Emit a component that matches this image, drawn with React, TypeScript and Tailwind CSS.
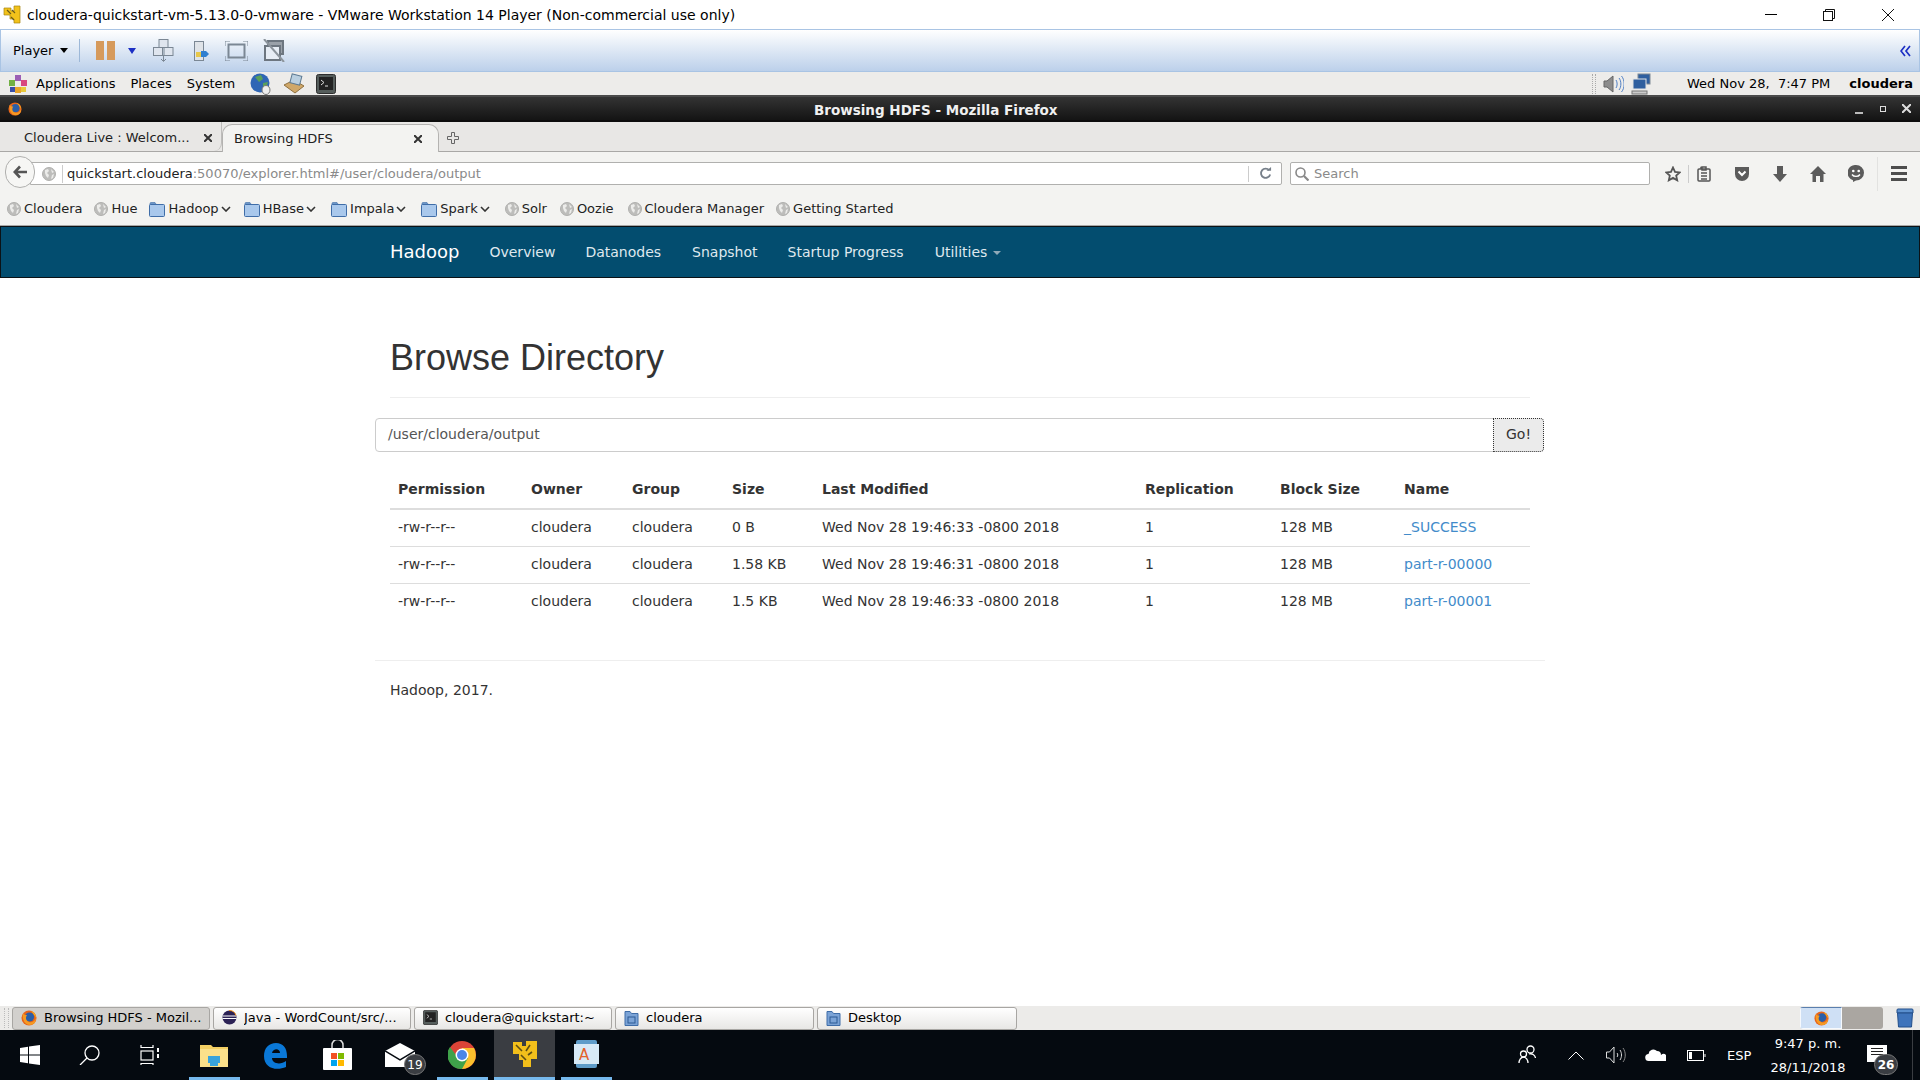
import React from 'react';

const rows = [
  { size: '0 B', time: 'Wed Nov 28 19:46:33 -0800 2018', name: '_SUCCESS' },
  { size: '1.58 KB', time: 'Wed Nov 28 19:46:31 -0800 2018', name: 'part-r-00000' },
  { size: '1.5 KB', time: 'Wed Nov 28 19:46:33 -0800 2018', name: 'part-r-00001' },
];

const Firefox = ({ className }: { className: string }) => (
  <svg viewBox="0 0 16 16" className={className}>
    <circle cx="8" cy="8" r="7.5" fill="#e8641b" />
    <circle cx="8.5" cy="7" r="4.6" fill="#2b5fa8" />
    <path d="M2 3c-1 5 1 12 7 12 4 0 6-3 6-7-1 3-4 5-7 4-3-1-4-4-2-7-2 0-3 0-4-2z" fill="#f59a23" />
    <path d="M10 1c3 1 5 4 5 7-1-2-2-4-5-7z" fill="#f6c21c" />
  </svg>
);

const Globe = () => (
  <svg viewBox="0 0 14 14" className="w-[14px] h-[14px] shrink-0">
    <circle cx="7" cy="7" r="6.5" fill="#bdbdbb" stroke="#b0b0ae" />
    <path d="M3 3l3-1 1 2-2 2 2 2-1 3-2-2-1-3zM9 2l3 3-2 1zM10 8l2-1-1 4-2 1z" fill="#ececea" />
  </svg>
);

const Folder = () => (
  <svg viewBox="0 0 16 16" className="w-[16px] h-[16px] shrink-0">
    <path d="M1 2.500a1 1 0 0 1 1-1h4l1 1.500v2H1z" fill="#6d97c9" stroke="#3f6da8" strokeWidth=".6" />
    <rect x=".5" y="3.500" width="15" height="12" rx="1" fill="#a9c8ec" stroke="#3f6da8" />
  </svg>
);

const Chevron = () => (
  <svg viewBox="0 0 10 6" className="w-[10px] h-[6px] shrink-0" fill="none" stroke="#333" strokeWidth="1.6">
    <path d="M1 1l4 4 4-4" />
  </svg>
);

const TaskFolder = () => (
  <svg viewBox="0 0 15 16" className="w-[15px] h-[16px] shrink-0">
    <path d="M1 1.500h5l1.500 2H14v12H1z" fill="#7ba3d6" stroke="#3f6da8" />
    <rect x="4" y="7" width="7" height="6" fill="none" stroke="#2c5a94" />
  </svg>
);

const TermIcon = ({ className }: { className: string }) => (
  <svg viewBox="0 0 20 20" className={className}>
    <rect x=".5" y=".5" width="19" height="19" rx="2" fill="#555d5b" stroke="#2e2e2e" />
    <rect x="3" y="3" width="14" height="13" fill="#222" />
    <path d="M5 6l3 2.500L5 11M9 12h3" fill="none" stroke="#ddd" />
  </svg>
);

const Bookmark = ({ label, folder, ml }: { label: string; folder?: boolean; ml: string }) => (
  <div className={`flex items-center ${ml}`}>
    {folder ? <Folder /> : <Globe />}
    <span className="ml-[3px]">{label}</span>
    {folder && <span className="ml-[2px]"><Chevron /></span>}
  </div>
);

const Task = ({ icon, label, w, active }: { icon: React.ReactNode; label: string; w: string; active?: boolean }) => (
  <div className={`flex items-center h-[23px] ${w} mr-[3px] pl-[8px] pb-px gap-[7px] border border-[#a8a6a3] rounded-[3px] ${active ? 'bg-[#d2d0cd]' : 'bg-gradient-to-b from-white to-[#e8e7e5]'}`}>
    {icon}
    <span className="truncate">{label}</span>
  </div>
);

export default function App() {
  return (
    <div className="w-[1920px] h-[1080px] overflow-hidden flex flex-col bg-white font-['DejaVu_Sans',sans-serif] text-[13px] text-[#222]">
      {/* vmware window title */}
      <div className="h-[29px] shrink-0 flex items-center bg-white pl-[3px]">
        <svg viewBox="0 0 18 20" className="w-[18px] h-[20px] shrink-0">
          <path d="M1 3h7v3h3V1h6v17h-6v-4H7v-4H1z" fill="#f2c21b" stroke="#a8850f" strokeWidth=".7" />
          <path d="M4 5l4 4M9 5l3 3M8 12l3 3" stroke="#6b5b1a" strokeWidth="1.2" />
        </svg>
        <span className="ml-[6px] pt-px text-[14px] text-black">cloudera-quickstart-vm-5.13.0-0-vmware - VMware Workstation 14 Player (Non-commercial use only)</span>
        <div className="ml-auto flex items-center">
          <div className="w-[12px] h-px bg-black mr-[46px]" />
          <svg viewBox="0 0 12 12" className="w-[12px] h-[12px] mr-[47px]" fill="none" stroke="#111">
            <rect x=".5" y="2.500" width="9" height="9" />
            <path d="M2.500 2.500v-2h9v9h-2" />
          </svg>
          <svg viewBox="0 0 12 12" className="w-[12px] h-[12px] mr-[26px]" fill="none" stroke="#111">
            <path d="M0 0l12 12M12 0L0 12" />
          </svg>
        </div>
      </div>

      {/* player toolbar */}
      <div className="h-[43px] shrink-0 flex items-center border border-[#a9c4e4] bg-gradient-to-b from-white to-[#bcd0ea] text-black">
        <span className="ml-[12px] text-[13px]">Player</span>
        <div className="ml-[7px] w-0 h-0 border-x-[4.5px] border-x-transparent border-t-[5px] border-t-black" />
        <div className="ml-[11px] w-px h-[23px] bg-[#9db8d8]" />
        <div className="ml-[16px] flex gap-[3px]">
          <div className="w-[8px] h-[19px] bg-[#d69a5c]" />
          <div className="w-[8px] h-[19px] bg-[#d69a5c]" />
        </div>
        <div className="ml-[13px] w-0 h-0 border-x-[4.5px] border-x-transparent border-t-[6px] border-t-[#1c2fc4]" />
        <svg viewBox="0 0 21 23" className="ml-[17px] w-[21px] h-[23px]" fill="#dfe5ee" stroke="#7b8794">
          <rect x="6" y=".5" width="9" height="8" /><rect x=".5" y="8.500" width="9" height="8" /><rect x="11" y="8.500" width="9" height="8" />
          <path d="M10.500 16v6M8 20l2.500 2.500L13 20" fill="none" />
        </svg>
        <svg viewBox="0 0 16 20" className="ml-[20px] w-[16px] h-[20px]">
          <rect x=".5" y=".5" width="9" height="19" fill="#dfe3e8" stroke="#7b8794" />
          <rect x="2" y="11" width="5" height="5" fill="#e8c84a" />
          <path d="M7 10h5l3 3-3 3H7z" fill="#2f7fd0" />
        </svg>
        <svg viewBox="0 0 23 20" className="ml-[15px] w-[23px] h-[20px]" fill="none" stroke="#7b8794">
          <rect x="3.500" y="3.500" width="16" height="13" strokeWidth="2" />
          <path d="M0 5V0h5M18 0h5v5M0 15v5h5M18 20h5v-5" />
        </svg>
        <svg viewBox="0 0 23 23" className="ml-[15px] w-[23px] h-[23px]" fill="none" stroke="#6d7680" strokeWidth="2">
          <rect x="5" y="2" width="15" height="13" fill="#9aa1a9" />
          <rect x="2" y="7" width="15" height="14" fill="#e7edf5" />
          <path d="M1 0l20 23" stroke="#8c949c" />
        </svg>
        <svg viewBox="0 0 11 12" className="ml-auto mr-[8px] w-[11px] h-[12px]" fill="none" stroke="#1c2fc4" strokeWidth="1.700">
          <path d="M5 1L1 6l4 5M10 1L6 6l4 5" />
        </svg>
      </div>

      {/* gnome panel */}
      <div className="h-[25px] shrink-0 flex items-center bg-[#edecea] border-b-2 border-[#4a4a4a] text-black">
        <svg viewBox="0 0 20 20" className="ml-[8px] w-[20px] h-[20px] shrink-0">
          <rect x="7" y="1" width="6" height="6" fill="#9c5fb5" /><rect x="13" y="6" width="6" height="6" fill="#d8477f" />
          <rect x="1" y="6" width="6" height="6" fill="#72b043" /><rect x="7" y="13" width="6" height="6" fill="#e9a52c" />
          <rect x="2" y="13" width="5" height="5" fill="#3a4fa8" /><rect x="13" y="13" width="5" height="5" fill="#e9c93a" />
        </svg>
        <span className="ml-[8px]">Applications</span>
        <span className="ml-[15px]">Places</span>
        <span className="ml-[15px]">System</span>
        <svg viewBox="0 0 22 22" className="ml-[15px] w-[22px] h-[22px]">
          <circle cx="10" cy="10" r="9.500" fill="#2f66b5" />
          <path d="M5 4l6-2 2 4-4 3zM13 10l5-1-2 6-3-1z" fill="#5aa05a" />
          <ellipse cx="16" cy="17" rx="4" ry="4.500" fill="#eee" stroke="#777" />
        </svg>
        <svg viewBox="0 0 22 22" className="ml-[11px] w-[22px] h-[22px]">
          <path d="M1 12l10-5 10 6-9 7z" fill="#cfa768" stroke="#8f703f" />
          <rect x="8" y="2" width="10" height="9" fill="#b9cfe0" stroke="#5d7a92" transform="rotate(15 13 6)" />
        </svg>
        <TermIcon className="ml-[11px] w-[20px] h-[20px]" />
        <div className="ml-auto flex items-center">
          <div className="w-[4px] h-[20px] border-x border-dotted border-[#aaa]" />
          <svg viewBox="0 0 21 20" className="ml-[7px] w-[21px] h-[20px]" fill="none">
            <path d="M1 7h3l6-5v16l-6-5H1z" fill="#8c8c8c" stroke="#666" />
            <path d="M13 6c1.500 2 1.500 6 0 8M16 4c2.500 3 2.500 9 0 12M18.500 2c3.500 4 3.500 12 0 16" stroke="#4f7fc4" />
          </svg>
          <svg viewBox="0 0 21 22" className="ml-[7px] w-[21px] h-[22px]">
            <rect x="7" y="1" width="12" height="10" fill="#2f5f9f" stroke="#7f8a96" />
            <rect x="2" y="6" width="13" height="10" fill="#2f5f9f" stroke="#e4e4e4" />
            <rect x="1" y="18" width="15" height="3" fill="#ccc" stroke="#777" />
          </svg>
          <span className="ml-[35px] text-[13px]">Wed Nov 28,&nbsp; 7:47 PM</span>
          <span className="ml-[19px] mr-[7px] font-bold">cloudera</span>
        </div>
      </div>

      {/* firefox title bar */}
      <div className="relative h-[25px] shrink-0 flex items-center bg-gradient-to-b from-[#343434] to-[#141414] border-b-2 border-[#0c0c0c]">
        <Firefox className="ml-[8px] w-[14px] h-[14px]" />
        <span className="absolute left-[814px] top-[3px] text-[13.5px] font-bold text-[#f0f0f0]">Browsing HDFS - Mozilla Firefox</span>
        <div className="ml-auto flex items-center">
          <div className="w-[8px] h-[2px] bg-[#bbb] mt-[8px]" />
          <div className="ml-[17px] w-[6px] h-[6px] border border-[#ddd]" />
          <svg viewBox="0 0 9 9" className="ml-[16px] mr-[9px] w-[9px] h-[9px]" stroke="#ddd" strokeWidth="2">
            <path d="M0 0l9 9M9 0L0 9" />
          </svg>
        </div>
      </div>

      {/* tabs */}
      <div className="h-[30px] shrink-0 flex items-end bg-[#e8e7e5] border-b border-[#a9a8a6]">
        <div className="flex items-center h-[29px] w-[222px] pl-[24px] pt-[3px] border-r border-[#bdbcba] rounded-br-[8px]">
          <span className="text-[13px]">Cloudera Live : Welcom...</span>
          <svg viewBox="0 0 8 8" className="ml-[14px] w-[8px] h-[8px]" stroke="#333" strokeWidth="2"><path d="M0 0l8 8M8 0L0 8" /></svg>
        </div>
        <div className="flex items-center h-[28px] w-[217px] pl-[11px] -mb-px bg-[#f3f3f1] border-t border-x border-[#b4b3b1] rounded-t-[10px]">
          <span>Browsing HDFS</span>
          <svg viewBox="0 0 8 8" className="ml-[81px] w-[8px] h-[8px]" stroke="#333" strokeWidth="2"><path d="M0 0l8 8M8 0L0 8" /></svg>
        </div>
        <svg viewBox="0 0 12 12" className="ml-[8px] mb-[7px] w-[12px] h-[12px]" fill="none" stroke="#666">
          <path d="M4.500.5h3v4h4v3h-4v4h-3v-4h-4v-3h4z" />
        </svg>
      </div>

      {/* nav bar */}
      <div className="h-[43px] shrink-0 flex items-center bg-[#f3f3f1] relative">
        <div className="flex-1 ml-[30px] h-[23px] flex items-center bg-white border border-[#b0b0ae] rounded-r-[2px]">
          <div className="ml-[11px]"><Globe /></div>
          <div className="ml-[6px] w-px h-[18px] bg-[#ccc]" />
          <span className="ml-[4px] text-[13px]">quickstart.cloudera<span className="text-[#8a8a8a]">:50070/explorer.html#/user/cloudera/output</span></span>
          <div className="ml-auto w-px h-[16px] bg-[#ccc]" />
          <svg viewBox="0 0 14 14" className="ml-[10px] mr-[9px] w-[13px] h-[13px]" fill="none" stroke="#77808a" strokeWidth="2">
            <path d="M11 3.500A5 5 0 1 0 12 8" /><path d="M8 4h5V0z" fill="#77808a" stroke="none" />
          </svg>
        </div>
        <div className="absolute left-[5px] top-[4px] w-[30px] h-[32px] rounded-full bg-[#f6f6f4] border border-[#b0b0ae] flex items-center justify-center">
          <svg viewBox="0 0 14 14" className="w-[14px] h-[14px]" fill="none" stroke="#555" strokeWidth="2.600">
            <path d="M7 1.500L1.800 7 7 12.500M2 7h12" />
          </svg>
        </div>
        <div className="ml-[8px] w-[360px] h-[23px] flex items-center bg-white border border-[#b0b0ae] rounded-[2px]">
          <svg viewBox="0 0 14 14" className="ml-[4px] w-[14px] h-[14px]" fill="none" stroke="#888" strokeWidth="1.600">
            <circle cx="5.500" cy="5.500" r="4.500" /><path d="M9 9l4.500 4.500" strokeWidth="2.200" />
          </svg>
          <span className="ml-[5px] text-[#8a8a8a]">Search</span>
        </div>
        <svg viewBox="0 0 16 16" className="ml-[15px] w-[16px] h-[16px]" fill="none" stroke="#555" strokeWidth="1.800">
          <path d="M8 1.500l2 4.400 4.700.5-3.500 3.200 1 4.700L8 11.900l-4.200 2.400 1-4.700L1.300 6.400 6 5.900z" />
        </svg>
        <div className="ml-[7px] w-px h-[18px] bg-[#ccc]" />
        <svg viewBox="0 0 14 16" className="ml-[8px] w-[14px] h-[16px]" fill="none" stroke="#555" strokeWidth="1.500">
          <rect x="1" y="3" width="12" height="12" rx="1" /><path d="M4 3V1.500h1.500M5 1h4v3H5zM4 7h6M4 10h6M4 13h6" />
        </svg>
        <svg viewBox="0 0 16 16" className="ml-[23px] w-[16px] h-[16px]">
          <path d="M1 1h14v7a7 7 0 0 1-14 0z" fill="#5b5b5b" /><path d="M4.500 5.500L8 9l3.500-3.500" fill="none" stroke="#fff" strokeWidth="2" />
        </svg>
        <svg viewBox="0 0 14 16" className="ml-[23px] w-[14px] h-[16px]" fill="#5b5b5b">
          <path d="M4 0h6v8h4l-7 8-7-8h4z" />
        </svg>
        <svg viewBox="0 0 16 16" className="ml-[23px] w-[16px] h-[16px]" fill="#5b5b5b">
          <path d="M8 0L0 8h2.500v8H6v-6h4v6h3.500V8H16z" />
        </svg>
        <svg viewBox="0 0 16 17" className="ml-[22px] w-[16px] h-[17px]">
          <path d="M8 0a8 7.800 0 0 1 0 15.600l-3 1.400v-1.800A8 7.800 0 0 1 8 0z" fill="#5b5b5b" />
          <circle cx="5.300" cy="6" r="1.300" fill="#fff" /><circle cx="10.700" cy="6" r="1.300" fill="#fff" />
          <path d="M4 9.500c1.800 2.500 6.200 2.500 8 0" fill="none" stroke="#fff" strokeWidth="1.400" />
        </svg>
        <div className="ml-[13px] w-px h-[34px] bg-[#e2e2e0]" />
        <div className="ml-[13px] mr-[13px] w-[16px] flex flex-col gap-[3px]">
          <div className="h-[3px] bg-[#4d4d4d]" /><div className="h-[3px] bg-[#4d4d4d]" /><div className="h-[3px] bg-[#4d4d4d]" />
        </div>
      </div>

      {/* bookmarks */}
      <div className="h-[31px] shrink-0 flex items-center bg-[#f3f3f1] border-b border-[#a9a8a6] pb-[2px]">
        <Bookmark label="Cloudera" ml="ml-[7px]" />
        <Bookmark label="Hue" ml="ml-[12px]" />
        <Bookmark label="Hadoop" folder ml="ml-[12px]" />
        <Bookmark label="HBase" folder ml="ml-[13px]" />
        <Bookmark label="Impala" folder ml="ml-[15px]" />
        <Bookmark label="Spark" folder ml="ml-[15px]" />
        <Bookmark label="Solr" ml="ml-[15px]" />
        <Bookmark label="Oozie" ml="ml-[13px]" />
        <Bookmark label="Cloudera Manager" ml="ml-[14px]" />
        <Bookmark label="Getting Started" ml="ml-[12px]" />
      </div>

      {/* page navbar */}
      <div className="h-[52px] shrink-0 flex items-center bg-[#034d6f] border border-[#0b1216] text-[14px] text-[#dfe8ee]">
        <span className="ml-[389px] pb-[2px] text-[18px] text-white">Hadoop</span>
        <span className="ml-[30px]">Overview</span>
        <span className="ml-[30px]">Datanodes</span>
        <span className="ml-[31px]">Snapshot</span>
        <span className="ml-[30px]">Startup Progress</span>
        <span className="ml-[31px]">Utilities</span>
        <div className="ml-[6px] mt-[2px] w-0 h-0 border-x-[4px] border-x-transparent border-t-[4px] border-t-[#8fa9b8]" />
      </div>

      {/* page */}
      <div className="flex-1 w-[1170px] mx-auto text-[14px] text-[#333]">
        <div className="mx-[15px] mt-[60px] pb-[19px] border-b border-[#eee] font-['Liberation_Sans',Arial,sans-serif] text-[36px] leading-[40px] text-[#333]">
          Browse Directory
        </div>
        <div className="mt-[20px] mr-px flex h-[34px]">
          <div className="flex-1 flex items-center pl-[12px] pb-px border border-[#ccc] rounded-l-[4px] text-[#555]">/user/cloudera/output</div>
          <button className="w-[51px] -ml-px pb-px bg-[#ebebeb] border border-dotted border-[#333] rounded-r-[4px] text-[#333]">Go!</button>
        </div>
        <table className="mt-[19px] mx-[15px] w-[1140px] table-fixed border-collapse">
          <thead>
            <tr className="h-[38px] border-b-2 border-[#ddd] text-left">
              <th className="w-[133px] px-[8px] font-bold">Permission</th>
              <th className="w-[101px] px-[8px] font-bold">Owner</th>
              <th className="w-[100px] px-[8px] font-bold">Group</th>
              <th className="w-[90px] px-[8px] font-bold">Size</th>
              <th className="w-[323px] px-[8px] font-bold">Last Modified</th>
              <th className="w-[135px] px-[8px] font-bold">Replication</th>
              <th className="w-[124px] px-[8px] font-bold">Block Size</th>
              <th className="px-[8px] font-bold">Name</th>
            </tr>
          </thead>
          <tbody>
            {rows.map((r, i) => (
              <tr key={r.name} className={`h-[37px] ${i > 0 ? 'border-t border-[#ddd]' : ''}`}>
                <td className="px-[8px]">-rw-r--r--</td>
                <td className="px-[8px]">cloudera</td>
                <td className="px-[8px]">cloudera</td>
                <td className="px-[8px]">{r.size}</td>
                <td className="px-[8px]">{r.time}</td>
                <td className="px-[8px]">1</td>
                <td className="px-[8px]">128 MB</td>
                <td className="px-[8px] text-[#428bca]">{r.name}</td>
              </tr>
            ))}
          </tbody>
        </table>
        <div className="mt-[40px] border-t border-[#eee]" />
        <div className="mt-[19px] ml-[15px] leading-[20px]">Hadoop, 2017.</div>
      </div>

      {/* gnome bottom panel */}
      <div className="h-[24px] shrink-0 flex items-center bg-[#ecebe9] text-black">
        <div className="ml-[4px] mr-[3px] w-[5px] h-[20px] border-x border-dotted border-[#bbb]" />
        <Task w="w-[198px]" active label="Browsing HDFS - Mozil..." icon={<Firefox className="w-[16px] h-[16px] shrink-0" />} />
        <Task w="w-[198px]" label="Java - WordCount/src/..." icon={
          <svg viewBox="0 0 15 15" className="w-[15px] h-[15px] shrink-0">
            <circle cx="7.500" cy="7.500" r="7" fill="#2c2255" />
            <path d="M1 6h13M.5 8.500h14" stroke="#fff" />
            <path d="M7 .5a7 7 0 0 1 7 5" fill="none" stroke="#f7941e" />
          </svg>
        } />
        <Task w="w-[198px]" label="cloudera@quickstart:~" icon={<TermIcon className="w-[15px] h-[15px] shrink-0" />} />
        <Task w="w-[199px]" label="cloudera" icon={<TaskFolder />} />
        <Task w="w-[200px]" label="Desktop" icon={<TaskFolder />} />
        <div className="ml-auto flex items-center h-[22px] w-[83px] rounded-[3px] bg-[#aaa6a1] overflow-hidden">
          <div className="w-[42px] h-full flex items-center justify-center bg-[#cfe0f5] border border-[#f6f9fd] border-t-[#5a7fae]">
            <Firefox className="w-[15px] h-[15px]" />
          </div>
        </div>
        <svg viewBox="0 0 18 20" className="ml-[13px] mr-[6px] w-[18px] h-[20px]">
          <path d="M1 2a1 1 0 0 1 1-1h14a1 1 0 0 1 1 1v3H1z" fill="#5a8fce" stroke="#234f8a" />
          <path d="M1.500 5h15l-1 14h-13z" fill="#3f74bb" stroke="#234f8a" />
        </svg>
      </div>

      {/* windows taskbar */}
      <div className="h-[50px] shrink-0 flex bg-[#050a10] text-white relative">
        <svg viewBox="0 0 20 20" className="absolute left-[20px] top-[15px] w-[20px] h-[20px]" fill="#fff">
          <path d="M0 3l8-1.200V9.500H0zM9 1.600L20 0v9.500H9zM0 10.500h8v7.700L0 17zM9 10.500h11V20L9 18.400z" />
        </svg>
        <svg viewBox="0 0 21 20" className="absolute left-[79px] top-[15px] w-[21px] h-[20px]" fill="none" stroke="#fff" strokeWidth="1.300">
          <circle cx="13" cy="8" r="7" /><path d="M8 13l-7 7" />
        </svg>
        <svg viewBox="0 0 20 20" className="absolute left-[140px] top-[15px] w-[20px] h-[20px]" fill="none" stroke="#fff" strokeWidth="1.200">
          <rect x="1" y="6" width="12" height="9" /><path d="M1 2.500h12M1 18.500h12M1 0v3M13 0v3M1 18v2M13 18v2" /><path d="M18 3v4M18 9v4" strokeWidth="2" />
        </svg>
        <svg viewBox="0 0 28 24" className="absolute left-[200px] top-[13px] w-[28px] h-[24px]">
          <path d="M0 2h11l2 2h15v20H0z" fill="#f3cf63" />
          <path d="M0 6h28v18H0z" fill="#fbe08a" />
          <path d="M8 13h12v7h-2v3h-8v-3H8z" fill="#38a3dc" />
        </svg>
        <div className="absolute left-[189px] bottom-0 w-[51px] h-[3px] bg-[#76b9ed]" />
        <svg viewBox="0 0 25 27" className="absolute left-[263px] top-[12px] w-[25px] h-[27px]">
          <path d="M1 14C1 6 6 1 13 1c7 0 11 5 11 13v2H9c0 6 9 7 14 3v6c-9 4-22 2-22-11zM9 11h8c0-5-7-5-8 0z" fill="#0a78d7" />
        </svg>
        <svg viewBox="0 0 29 30" className="absolute left-[323px] top-[10px] w-[29px] h-[30px]">
          <path d="M9 9V5a5 5 0 0 1 11 0v4" fill="none" stroke="#ddd" strokeWidth="1.500" />
          <rect y="8" width="29" height="22" rx="1" fill="#fff" />
          <rect x="8" y="13" width="6" height="6" fill="#f25022" /><rect x="15" y="13" width="6" height="6" fill="#7fba00" />
          <rect x="8" y="20" width="6" height="6" fill="#00a4ef" /><rect x="15" y="20" width="6" height="6" fill="#ffb900" />
        </svg>
        <svg viewBox="0 0 30 24" className="absolute left-[385px] top-[13px] w-[30px] h-[24px]">
          <path d="M0 8L15 0l15 8v16H0z" fill="#fff" /><path d="M0 8l15 9 15-9" fill="none" stroke="#050a10" strokeWidth="1.500" />
        </svg>
        <div className="absolute left-[404px] top-[24px] w-[22px] h-[21px] rounded-full bg-[#3a3d42] border border-[#777] flex items-center justify-center text-[12px]">19</div>
        <svg viewBox="0 0 28 28" className="absolute left-[448px] top-[11px] w-[28px] h-[28px]">
          <circle cx="14" cy="14" r="14" fill="#db4437" />
          <path d="M14 28a14 14 0 0 0 12-21H14z" fill="#fbc02d" />
          <path d="M2 6a14 14 0 0 0 12 22l6-11-6 0-6-3z" fill="#3fa24a" />
          <circle cx="14" cy="14" r="6.500" fill="#fff" /><circle cx="14" cy="14" r="5" fill="#4a86e8" />
        </svg>
        <div className="absolute left-[437px] bottom-0 w-[51px] h-[3px] bg-[#76b9ed]" />
        <div className="absolute left-[494px] top-0 w-[61px] h-[50px] bg-[#3a3d42] border-b-[3px] border-[#76b9ed]" />
        <svg viewBox="0 0 26 28" className="absolute left-[512px] top-[10px] w-[26px] h-[28px]">
          <path d="M1 2h9v4h4V1h11v18h-6v8h-8v-7H7v-6H1z" fill="#f2bf1b" />
          <path d="M4 5l6 6M18 5l-4 6M9 15l5 5M20 12l-4 3" stroke="#5c4d14" strokeWidth="1.600" />
        </svg>
        <svg viewBox="0 0 25 28" className="absolute left-[574px] top-[10px] w-[25px] h-[28px]">
          <rect x="2" y="0" width="21" height="28" rx="2" fill="#5f9cc9" />
          <rect x="0" y="4" width="25" height="20" fill="#d7e9f6" />
        </svg>
        <span className="absolute left-[579px] top-[14px] text-[15px] text-[#e3622b]">A</span>
        <div className="absolute left-[561px] bottom-0 w-[51px] h-[3px] bg-[#76b9ed]" />

        <svg viewBox="0 0 18 19" className="absolute left-[1518px] top-[15px] w-[18px] h-[19px]" fill="none" stroke="#fff" strokeWidth="1.300">
          <circle cx="12.500" cy="4.500" r="3.500" /><circle cx="5.500" cy="9" r="3" /><path d="M1 18c0-3 2-6 4.500-6s4.500 3 4.500 6M11 9c3-1 6 1 6.500 4" />
        </svg>
        <svg viewBox="0 0 16 9" className="absolute left-[1568px] top-[21px] w-[16px] h-[9px]" fill="none" stroke="#fff"><path d="M.5 8.500L8 1l7.500 7.500" /></svg>
        <svg viewBox="0 0 20 18" className="absolute left-[1606px] top-[16px] w-[20px] h-[18px]" fill="none" stroke="#ddd">
          <path d="M.5 6h3L8 1v16l-4.500-5h-3z" /><path d="M11 7c1 1 1 3 0 4M14 4c2 3 2 7 0 10" /><path d="M17 2c3 4 3 10 0 14" stroke="#888" />
        </svg>
        <svg viewBox="0 0 21 14" className="absolute left-[1645px] top-[18px] w-[21px] h-[14px]" fill="#fff">
          <path d="M4 13a3.500 3.500 0 0 1-.5-7A5 5 0 0 1 12 3a4 4 0 0 1 4 4 3 3 0 0 1 5 6z" />
        </svg>
        <svg viewBox="0 0 19 11" className="absolute left-[1687px] top-[20px] w-[19px] h-[11px]" fill="none" stroke="#fff">
          <rect x=".5" y=".5" width="16" height="10" /><rect x="2" y="2" width="3" height="7" fill="#fff" stroke="none" /><path d="M18 4v3" />
        </svg>
        <span className="absolute left-[1727px] top-[16px] text-[13px]">ESP</span>
        <div className="absolute left-[1770px] top-[2px] w-[76px] text-center text-[13px] leading-[24px]">
          <div>9:47 p. m.</div>
          <div>28/11/2018</div>
        </div>
        <div className="absolute left-[1867px] top-[15px] w-[20px] h-[17px] bg-white flex flex-col gap-[2px] px-[4px] pt-[3px]">
          <div className="h-px bg-[#222]" /><div className="h-px bg-[#222]" /><div className="h-px bg-[#222]" />
        </div>
        <div className="absolute left-[1874px] top-[24px] w-[24px] h-[21px] rounded-full bg-[#3a3d42] border border-[#777] flex items-center justify-center text-[12px] font-bold">26</div>
        <div className="absolute left-[1912px] top-0 w-px h-[50px] bg-[#3a3d42]" />
      </div>
    </div>
  );
}
